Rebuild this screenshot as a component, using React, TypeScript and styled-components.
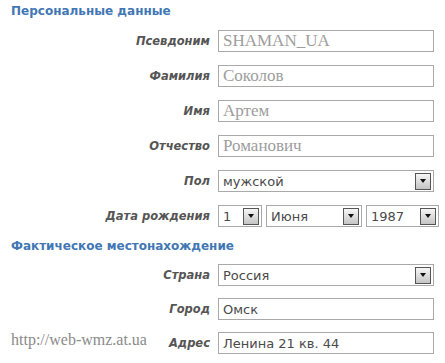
import React from "react";
import styled, { createGlobalStyle } from "styled-components";

const GlobalStyle = createGlobalStyle`
  html, body {
    margin: 0;
    padding: 0;
    background: #ffffff;
  }
  body {
    font-family: "DejaVu Sans", Verdana, sans-serif;
  }
`;

const Page = styled.div`
  width: 445px;
  height: 363px;
  position: relative;
  overflow: hidden;
  background: #fff;
`;

const Heading = styled.h2`
  margin: 0;
  padding: 2px 0 0 11px;
  height: 18px;
  font-family: "DejaVu Sans", Verdana, sans-serif;
  font-size: 12px;
  line-height: 18px;
  font-weight: bold;
  color: #4277b4;
`;

const Form = styled.div<{ $gap: number; $top: number; $bottom: number }>`
  display: grid;
  grid-template-columns: 210px 1fr;
  column-gap: 8px;
  row-gap: ${(p) => p.$gap}px;
  margin-top: ${(p) => p.$top}px;
  margin-bottom: ${(p) => p.$bottom}px;
  grid-auto-rows: 22px;
`;

const Label = styled.label`
  display: flex;
  align-items: center;
  justify-content: flex-end;
  font-family: "DejaVu Sans", Verdana, sans-serif;
  font-size: 11.5px;
  font-weight: bold;
  font-style: italic;
  color: #555;
`;

const Field = styled.div<{ $serif?: boolean; $width?: number }>`
  box-sizing: border-box;
  width: ${(p) => p.$width ?? 216}px;
  height: 22px;
  border: 1px solid #a9a9a9;
  background: #fff;
  display: flex;
  align-items: center;
  padding: 0 2px 0 4px;
  font-family: ${(p) =>
    p.$serif
      ? '"Liberation Serif", "Times New Roman", serif'
      : '"DejaVu Sans", Verdana, sans-serif'};
  font-size: ${(p) => (p.$serif ? 17 : 13)}px;
  color: ${(p) => (p.$serif ? "#9d9d9d" : "#4a4a4a")};
  white-space: nowrap;
`;

const FieldText = styled.span`
  flex: 1;
  overflow: hidden;
`;

const DropButton = styled.span`
  box-sizing: border-box;
  width: 16px;
  height: 17px;
  border: 1px solid #555;
  background: linear-gradient(#f6f6f6, #c4c4c4);
  display: flex;
  align-items: center;
  justify-content: center;
`;

const Triangle = styled.span`
  width: 0;
  height: 0;
  border-left: 3.5px solid transparent;
  border-right: 3.5px solid transparent;
  border-top: 4px solid #111;
`;

const DateRow = styled.div`
  display: flex;
  gap: 4px;
`;

const Watermark = styled.div`
  position: absolute;
  left: 11px;
  top: 331px;
  font-family: "Liberation Serif", "Times New Roman", serif;
  font-size: 16px;
  color: #8a8a8a;
`;

function Select({ value, width }: { value: string; width?: number }) {
  return (
    <Field $width={width}>
      <FieldText>{value}</FieldText>
      <DropButton>
        <Triangle />
      </DropButton>
    </Field>
  );
}

export default function App() {
  return (
    <Page>
      <GlobalStyle />
      <Heading>Персональные данные</Heading>
      <Form $gap={13} $top={10} $bottom={8}>
        <Label>Псевдоним</Label>
        <Field $serif>SHAMAN_UA</Field>
        <Label>Фамилия</Label>
        <Field $serif>Соколов</Field>
        <Label>Имя</Label>
        <Field $serif>Артем</Field>
        <Label>Отчество</Label>
        <Field $serif>Романович</Field>
        <Label>Пол</Label>
        <Select value="мужской" />
        <Label>Дата рождения</Label>
        <DateRow>
          <Select value="1" width={44} />
          <Select value="Июня" width={96} />
          <Select value="1987" width={73} />
        </DateRow>
      </Form>
      <Heading>Фактическое местонахождение</Heading>
      <Form $gap={12} $top={9} $bottom={0}>
        <Label>Страна</Label>
        <Select value="Россия" />
        <Label>Город</Label>
        <Field>Омск</Field>
        <Label>Адрес</Label>
        <Field>Ленина 21 кв. 44</Field>
      </Form>
      <Watermark>http://web-wmz.at.ua</Watermark>
    </Page>
  );
}
